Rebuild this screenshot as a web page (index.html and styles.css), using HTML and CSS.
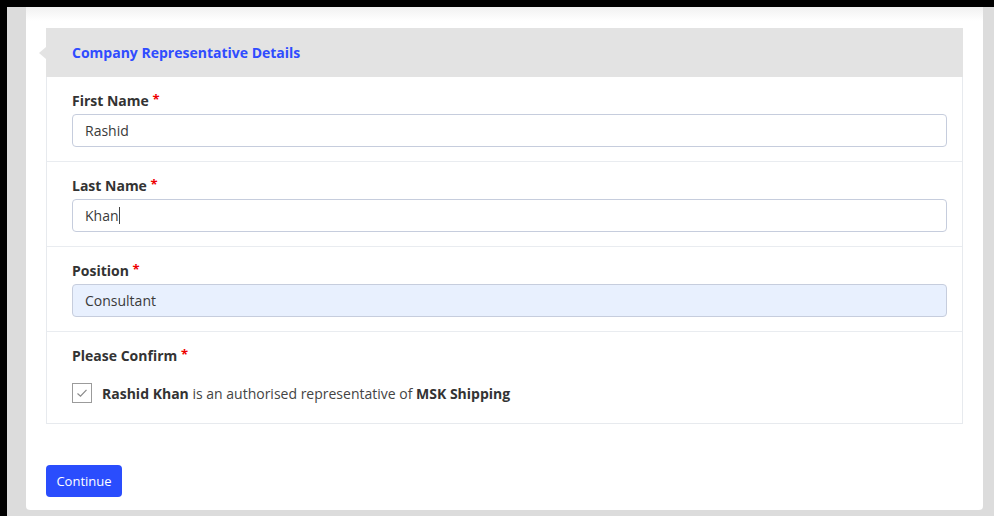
FILE: index.html
```html
<!DOCTYPE html>
<html lang="en">
<head>
  <meta charset="UTF-8">
  <meta name="viewport" content="width=device-width, initial-scale=1.0">
  <title>Company Representative Details</title>
  <link rel="stylesheet" href="styles.css">
</head>
<body>

<div class="frame">
  <div class="card">

    <!-- Panel de datos del representante -->
    <div class="panel">
      <div class="panel-heading">
        <span class="panel-title">Company Representative Details</span>
      </div>

      <div class="form-row">
        <label class="form-label" for="firstName">First Name <span class="req">*</span></label>
        <input class="form-input" type="text" id="firstName" value="Rashid">
      </div>

      <div class="form-row">
        <label class="form-label" for="lastName">Last Name <span class="req">*</span></label>
        <div class="form-input fake-input">Khan<span class="caret"></span></div>
      </div>

      <div class="form-row">
        <label class="form-label" for="position">Position <span class="req">*</span></label>
        <input class="form-input autofill" type="text" id="position" value="Consultant">
      </div>

      <div class="form-row confirm-row">
        <div class="form-label">Please Confirm <span class="req">*</span></div>
        <div class="confirm">
          <span class="checkbox">
            <svg width="12" height="10" viewBox="0 0 12 10"><path d="M1.5 5.5 L4.5 8.2 L10.5 1.8" fill="none" stroke="#8a8a8a" stroke-width="1.2"/></svg>
          </span>
          <span class="confirm-text"><b>Rashid Khan</b> is an authorised representative of <b>MSK Shipping</b></span>
        </div>
      </div>
    </div>

    <button class="btn-continue">Continue</button>
  </div>
</div>

</body>
</html>
```

FILE: styles.css
```css
html, body {
  margin: 0;
  height: 100%;
}

body {
  background-color: #dcdcdc; /* gris de fondo */
  font-family: "Open Sans", "Noto Sans", Arial, sans-serif;
  color: #333;
  overflow: hidden;
}

.frame {
  height: 100%;
  box-sizing: border-box;
  border-top: 7px solid #000;
  border-left: 7px solid #000;
  padding-left: 19px;
}

.card {
  width: 957px;
  height: 503px;
  box-sizing: border-box;
  padding: 21px 20px 0 20px;
  background: linear-gradient(#f1f1f1, #fff 14px);
  border-radius: 0 0 4px 4px;
}

.panel {
  border: 1px solid #e7eaee;
  border-top: none;
  background: #fff;
}

.panel-heading {
  position: relative;
  height: 49px;
  margin: 0 -1px;
  padding-left: 26px;
  background-color: #e3e3e3;
  display: flex;
  align-items: center;
}

/* pequeña flecha a la izquierda del encabezado */
.panel-heading::before {
  content: "";
  position: absolute;
  left: -7px;
  top: 19px;
  border-top: 6px solid transparent;
  border-bottom: 6px solid transparent;
  border-right: 7px solid #e3e3e3;
}

.panel-title {
  color: #2f4cff;
  font-size: 14px;
  font-weight: 700;
}

.form-row {
  padding: 14px 15px 14px 25px;
  border-bottom: 1px solid #e9ecf0;
}

.form-row:last-child {
  border-bottom: none;
}

.form-label {
  display: block;
  height: 19px;
  font-size: 14px;
  line-height: 19px;
  font-weight: 700;
  color: #333;
  margin-bottom: 4px;
}

.req {
  position: relative;
  top: -2px;
  color: #e00;
  font-size: 13px;
  line-height: 0;
}

.form-input {
  display: block;
  width: 100%;
  height: 33px;
  box-sizing: border-box;
  padding: 0 12px;
  border: 1px solid #c6cddd;
  border-radius: 4px;
  font-family: inherit;
  font-size: 14px;
  color: #3a3a3a;
  background: #fff;
  outline: none;
}

.fake-input {
  display: flex;
  align-items: center;
}

.caret {
  display: inline-block;
  width: 1px;
  height: 17px;
  background: #444;
}

.autofill {
  background-color: #e8f0fe;
}

.confirm-row {
  padding-bottom: 20px;
}

.confirm {
  margin-top: 18px;
  display: flex;
  align-items: center;
  gap: 10px;
}

.checkbox {
  width: 20px;
  height: 20px;
  box-sizing: border-box;
  border: 1px solid #9b9b9b;
  display: flex;
  align-items: center;
  justify-content: center;
}

.confirm-text {
  font-size: 14px;
  color: #444;
}

.confirm-text b {
  color: #333;
}

.btn-continue {
  margin-top: 41px;
  width: 76px;
  height: 32px;
  padding: 0;
  border: none;
  border-radius: 4px;
  background-color: #2a4dfd;
  color: #fff;
  font-family: inherit;
  font-size: 13px;
  cursor: pointer;
}
```
